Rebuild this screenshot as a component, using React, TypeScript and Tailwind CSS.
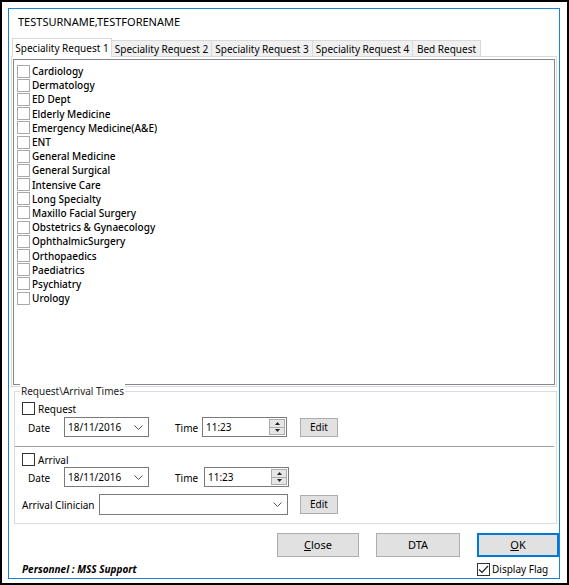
const specialities = [
  'Cardiology',
  'Dermatology',
  'ED Dept',
  'Elderly Medicine',
  'Emergency Medicine(A&E)',
  'ENT',
  'General Medicine',
  'General Surgical',
  'Intensive Care',
  'Long Specialty',
  'Maxillo Facial Surgery',
  'Obstetrics & Gynaecology',
  'OphthalmicSurgery',
  'Orthopaedics',
  'Paediatrics',
  'Psychiatry',
  'Urology',
];

const tabs = [
  { label: 'Speciality Request 2', w: 'w-[100px]' },
  { label: 'Speciality Request 3', w: 'w-[101px]' },
  { label: 'Speciality Request 4', w: 'w-[100px]' },
  { label: 'Bed Request', w: 'w-[68px]' },
];

function Chevron() {
  return (
    <svg width="9" height="5" viewBox="0 0 9 5" className="shrink-0">
      <path d="M0.5 0.5 L4.5 4.5 L8.5 0.5" fill="none" stroke="#555" strokeWidth="1" />
    </svg>
  );
}

function DateBox() {
  return (
    <div className="w-[85px] h-[20px] border border-[#7a7a7a] bg-white flex items-center pl-[3px] pr-[5px] justify-between">
      <span>18/11/2016</span>
      <Chevron />
    </div>
  );
}

function TimeBox() {
  return (
    <div className="w-[85px] h-[20px] border border-[#7a7a7a] bg-white flex items-center pl-[3px] pr-[1px] justify-between">
      <span>11:23</span>
      <div className="w-[16px] h-[16px] flex flex-col border border-[#acacac] bg-[#e6e6e6]">
        <div className="flex-1 flex items-center justify-center border-b border-[#acacac]">
          <svg width="5" height="3" viewBox="0 0 5 3"><path d="M2.5 0 L5 3 L0 3 Z" fill="#222" /></svg>
        </div>
        <div className="flex-1 flex items-center justify-center">
          <svg width="5" height="3" viewBox="0 0 5 3"><path d="M0 0 L5 0 L2.5 3 Z" fill="#222" /></svg>
        </div>
      </div>
    </div>
  );
}

function EditButton() {
  return (
    <div className="w-[38px] h-[19px] border border-[#adadad] bg-[#e1e1e1] flex items-center justify-center">
      Edit
    </div>
  );
}

export default function App() {
  return (
    <div
      className="w-[569px] h-[585px] bg-white border-2 border-black pt-[6px] pl-[6px] pr-[7px] pb-[4px] text-black text-[10px] whitespace-nowrap"
      style={{ fontFamily: '"Noto Sans", "Open Sans", sans-serif' }}
    >
      <div className="h-full border border-[#1883d7] flex flex-col">
        {/* title */}
        <div className="pt-[5px] pl-[9px] h-[21px] text-[11px] leading-[16px]">TESTSURNAME,TESTFORENAME</div>

        {/* tabs */}
        <div className="mt-[8px] ml-[3px] h-[19px] flex items-end leading-none">
          <div className="w-[100px] h-[19px] bg-white border border-b-0 border-[#d9d9d9] flex items-center justify-center relative z-10">
            Speciality Request 1
          </div>
          {tabs.map((t) => (
            <div
              key={t.label}
              className={`${t.w} h-[17px] bg-[#f0f0f0] border border-[#d9d9d9] border-l-0 flex items-center justify-center`}
            >
              {t.label}
            </div>
          ))}
        </div>

        {/* tab panel */}
        <div className="ml-[2px] w-[546px] h-[331px] border border-[#d9d9d9] p-[1px] pt-[2px] -mt-px">
          <div className="h-full border border-[#828790] pt-[4px] pl-[3px]">
            {specialities.map((s) => (
              <div key={s} className="h-[14.2px] flex items-center gap-[2px] font-medium">
                <div className="w-[13px] h-[13px] border border-[#a8a8a8] bg-white shrink-0" />
                <span className="leading-none">{s}</span>
              </div>
            ))}
          </div>
        </div>

        {/* group box */}
        <div className="mt-[4px] ml-[5px] w-[543px] h-[133px] border border-[#dcdcdc] relative">
          <span className="absolute left-[5px] -top-[8px] bg-white px-px leading-[14px] text-[#222]">
            Request\Arrival Times
          </span>
          <div className="pl-[7px] pt-[10px] flex items-center gap-[3px] h-[23px] leading-none">
            <div className="w-[13px] h-[13px] border border-[#333] bg-white" />
            <span>Request</span>
          </div>
          <div className="mt-[2px] flex items-center h-[20px]">
            <span className="w-[49px] pl-[13px] pt-[3px]">Date</span>
            <DateBox />
            <span className="ml-[26px] w-[27px] pt-[3px]">Time</span>
            <TimeBox />
            <div className="ml-[13px]">
              <EditButton />
            </div>
          </div>
          <div className="mt-[9px] h-px bg-[#a0a0a0] mr-[2px]" />
          <div className="pl-[7px] pt-[6px] flex items-center gap-[3px] h-[19px] leading-none">
            <div className="w-[13px] h-[13px] border border-[#333] bg-white" />
            <span>Arrival</span>
          </div>
          <div className="mt-px flex items-center h-[20px]">
            <span className="w-[49px] pl-[13px] pt-[3px]">Date</span>
            <DateBox />
            <span className="ml-[26px] w-[29px] pt-[3px]">Time</span>
            <TimeBox />
          </div>
          <div className="mt-[7px] flex items-center h-[21px]">
            <span className="w-[84px] pl-[7px] pt-[2px]">Arrival Clinician</span>
            <div className="w-[189px] h-[21px] border border-[#7a7a7a] bg-white flex items-center justify-end pr-[5px]">
              <Chevron />
            </div>
            <div className="ml-[12px]">
              <EditButton />
            </div>
          </div>
        </div>

        {/* footer */}
        <div className="mt-[9px] flex justify-end gap-[18px] text-[11px]">
          <div className="w-[82px] h-[24px] border border-[#adadad] bg-[#e1e1e1] flex items-center justify-center">
            <span><u>C</u>lose</span>
          </div>
          <div className="w-[84px] h-[24px] border border-[#adadad] bg-[#e1e1e1] flex items-center justify-center -ml-px">
            DTA
          </div>
          <div className="w-[82px] h-[24px] border-2 border-[#0078d7] bg-[#e1e1e1] flex items-center justify-center -ml-px">
            <span><u>O</u>K</span>
          </div>
        </div>
        <div className="flex items-center justify-between mt-[5px]">
          <span className="pl-[13px] italic font-bold">Personnel : MSS Support</span>
          <div className="w-[82px] flex items-center gap-[2px]">
            <div className="w-[13px] h-[13px] border border-[#333] bg-white flex items-center justify-center">
              <svg width="11" height="9" viewBox="0 0 11 9">
                <path d="M1 4.5 L4 7.5 L10 1" fill="none" stroke="#222" strokeWidth="1.2" />
              </svg>
            </div>
            <span>Display Flag</span>
          </div>
        </div>
      </div>
    </div>
  );
}
